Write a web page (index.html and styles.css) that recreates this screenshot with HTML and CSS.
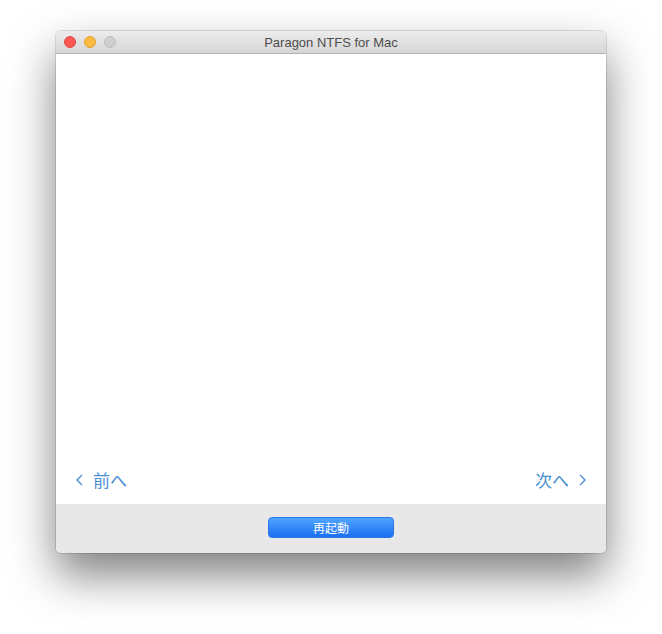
FILE: index.html
```html
<!DOCTYPE html>
<html>
<head>
<meta charset="utf-8">
<link rel="stylesheet" href="styles.css">
</head>
<body>
<div class="window">
  <div class="titlebar">
    <div class="lights">
      <span class="light red"></span>
      <span class="light yellow"></span>
      <span class="light gray"></span>
    </div>
    <div class="title">Paragon NTFS for Mac</div>
  </div>
  <div class="content">
    <div class="nav">
      <span class="navlink prev"><svg class="chev" width="7" height="12" viewBox="0 0 7 12"><path d="M6 1 L1 6 L6 11" fill="none" stroke="currentColor" stroke-width="1.4"/></svg>前へ</span>
      <span class="navlink next">次へ<svg class="chev" width="7" height="12" viewBox="0 0 7 12"><path d="M1 1 L6 6 L1 11" fill="none" stroke="currentColor" stroke-width="1.4"/></svg></span>
    </div>
  </div>
  <div class="footer">
    <button class="btn">再起動</button>
  </div>
</div>
</body>
</html>
```
FILE: styles.css
```css
html, body { margin: 0; padding: 0; background: #fff; }
body { padding: 31px 0 0 56px; min-height: 634px; box-sizing: border-box; font-family: "Liberation Sans", "Noto Sans CJK JP", sans-serif; }
.window {
  width: 550px;
  height: 522px;
  border-radius: 5px;
  overflow: hidden;
  display: flex;
  flex-direction: column;
  box-shadow: 0 0 0 1px rgba(0,0,0,0.12), 0 22px 45px rgba(0,0,0,0.5);
  background: #fff;
}
.titlebar {
  height: 22px;
  flex: none;
  position: relative;
  background: linear-gradient(#ececec, #d6d6d6);
  border-bottom: 1px solid #b4b4b4;
  display: flex;
  align-items: center;
  justify-content: center;
}
.lights { position: absolute; left: 8px; top: 5px; display: flex; gap: 8px; }
.light { width: 12px; height: 12px; border-radius: 50%; box-sizing: border-box; }
.red { background: #fc5753; border: 1px solid #df4744; }
.yellow { background: #fdbc40; border: 1px solid #de9f34; }
.gray { background: #cfcfcf; border: 1px solid #bdbdbd; }
.title { font-size: 13px; color: #4d4d4d; }
.content {
  flex: 1;
  display: flex;
  flex-direction: column;
  justify-content: flex-end;
  padding: 0 20px 12px 20px;
}
.nav { display: flex; justify-content: space-between; align-items: center; }
.navlink { color: #4a8fd2; font-size: 17px; font-weight: 400; display: flex; align-items: center; gap: 10px; font-family: "Noto Sans CJK JP", sans-serif; }
.next { gap: 10px; }
.chev { display: block; }
.footer {
  height: 49px;
  flex: none;
  background: #e8e8e8;
  display: flex;
  justify-content: center;
  padding-top: 13px;
  box-sizing: border-box;
}
.btn {
  width: 126px;
  height: 21px;
  border: 1px solid #2a78e8;
  border-radius: 4px;
  background: linear-gradient(#50a5ff, #1b6ff3);
  color: #fff;
  font-size: 12px;
  font-family: "Noto Sans CJK JP", sans-serif;
  padding: 0;
  line-height: 19px;
}
```
